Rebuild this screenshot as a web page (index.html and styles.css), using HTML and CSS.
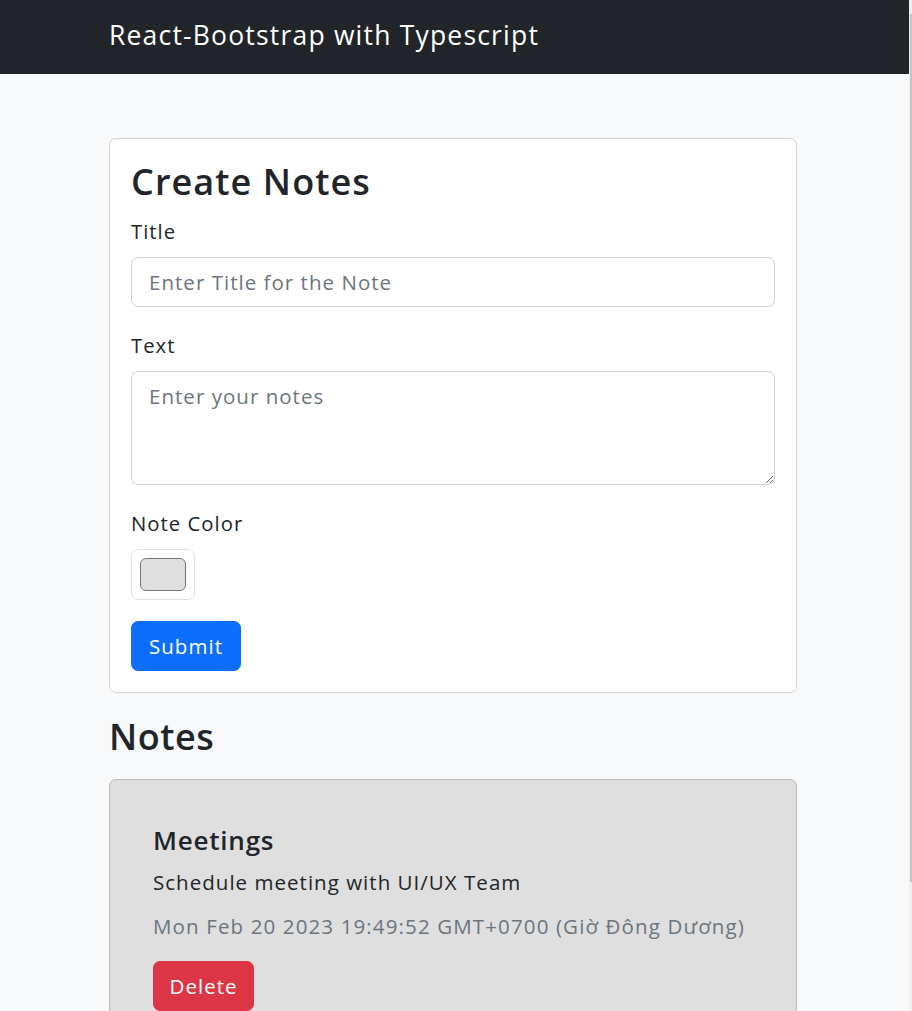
FILE: index.html
```html
<!DOCTYPE html>
<html lang="en">
<head>
<meta charset="utf-8">
<title>React-Bootstrap with Typescript</title>
<link rel="stylesheet" href="styles.css">
</head>
<body>
<div class="window">
  <div class="page">
    <header class="navbar">
      <div class="container">
        <span class="brand">React-Bootstrap with Typescript</span>
      </div>
    </header>
    <main class="container main">
      <section class="card form-card">
        <h2 class="heading create-heading">Create Notes</h2>
        <form class="note-form">
          <div class="group">
            <label class="form-label" for="title">Title</label>
            <input class="form-control" id="title" type="text" placeholder="Enter Title for the Note">
          </div>
          <div class="group">
            <label class="form-label" for="text">Text</label>
            <textarea class="form-control textarea" id="text" placeholder="Enter your notes"></textarea>
          </div>
          <div class="group">
            <label class="form-label" for="color">Note Color</label>
            <input class="color-input" id="color" type="color" value="#dfdfdf">
          </div>
          <button class="btn btn-primary" type="button">Submit</button>
        </form>
      </section>

      <h2 class="heading notes-heading">Notes</h2>

      <section class="card note-card">
        <h5 class="note-title">Meetings</h5>
        <p class="note-text">Schedule meeting with UI/UX Team</p>
        <p class="note-date">Mon Feb 20 2023 19:49:52 GMT+0700 (Giờ Đông Dương)</p>
        <button class="btn btn-danger" type="button">Delete</button>
      </section>
    </main>
  </div>
  <div class="scroll-track"><div class="scroll-thumb"></div></div>
</div>
</body>
</html>
```

FILE: styles.css
```css
* { box-sizing: border-box; }

html, body {
  margin: 0;
  padding: 0;
  height: 1011px;
  overflow: hidden;
}

body {
  font-family: "Open Sans", "Noto Sans", sans-serif;
  font-size: 20.5px;
  line-height: 30px;
  letter-spacing: 0.05em;
  color: #212529;
  background: #f8f9fa;
}

.window {
  display: flex;
  height: 1011px;
}

.page {
  flex: 1;
  overflow: hidden;
}

.scroll-track {
  width: 3px;
  background: #efefef;
  display: flex;
  justify-content: flex-end;
  padding-top: 14px;
}

.scroll-thumb {
  width: 2px;
  height: 868px;
  background: #c4c4c4;
}

.container {
  width: 688px;
  margin-left: 109px;
}

.navbar {
  height: 74px;
  padding-bottom: 4px;
  background: #212529;
  display: flex;
  align-items: center;
}

.brand {
  color: #ffffff;
  font-size: 26.5px;
  line-height: 32px;
  letter-spacing: 0.045em;
  white-space: nowrap;
}

.main {
  padding-top: 64px;
}

.card {
  border: 1px solid #d3d3d3;
  border-radius: 7px;
  background: #ffffff;
}

.form-card {
  padding: 21px;
}

.heading {
  margin: 0 0 13px;
  font-size: 36px;
  line-height: 43px;
  font-weight: 600;
  letter-spacing: 0.015em;
}

.create-heading {
  letter-spacing: 0.03em;
}

.note-form {
  display: flex;
  flex-direction: column;
  align-items: flex-start;
}

.group {
  width: 100%;
  display: flex;
  flex-direction: column;
  align-items: flex-start;
  margin-bottom: 23px;
}

.group:last-of-type {
  margin-bottom: 21px;
}

.form-label {
  display: block;
  margin-bottom: 11px;
  font-size: 20.3px;
  line-height: 30px;
}

.form-control {
  display: block;
  width: 100%;
  height: 50px;
  padding: 9px 17px;
  font-family: inherit;
  font-size: 20.5px;
  line-height: 30px;
  letter-spacing: 0.05em;
  color: #212529;
  background: #ffffff;
  border: 1px solid #ced4da;
  border-radius: 7px;
  outline: none;
}

.form-control::placeholder {
  color: #6c757d;
  opacity: 1;
}

.textarea {
  height: 114px;
  resize: vertical;
}

.color-input {
  -webkit-appearance: none;
  appearance: none;
  width: 64px;
  height: 51px;
  padding: 8px;
  margin: 0;
  background: #ffffff;
  border: 1px solid #dee2e6;
  border-radius: 7px;
  cursor: pointer;
}

.color-input::-webkit-color-swatch-wrapper {
  padding: 0;
}

.color-input::-webkit-color-swatch {
  border: 1px solid #767676;
  border-radius: 6px;
}

.btn {
  display: inline-block;
  height: 50px;
  padding: 9px 17px;
  font-family: inherit;
  font-size: 20.5px;
  line-height: 30px;
  letter-spacing: 0.05em;
  color: #ffffff;
  border: 1px solid transparent;
  border-radius: 7px;
  cursor: pointer;
}

.btn-primary {
  background: #0d6efd;
  border-color: #0d6efd;
}

.btn-danger {
  background: #dc3545;
  border-color: #dc3545;
  padding: 9px 15.5px;
}

.notes-heading {
  margin: 22px 0 21px;
}

.note-card {
  background: #dfdfdf;
  border-color: #b9b9b9;
  padding: 45px 43px 43px;
}

.note-title {
  margin: 0 0 11px;
  font-size: 26px;
  line-height: 31px;
  font-weight: 600;
  letter-spacing: 0.03em;
}

.note-text {
  margin: 0 0 14px;
}

.note-date {
  margin: 0 0 20px;
  color: #6c757d;
  letter-spacing: 0.055em;
}
```
